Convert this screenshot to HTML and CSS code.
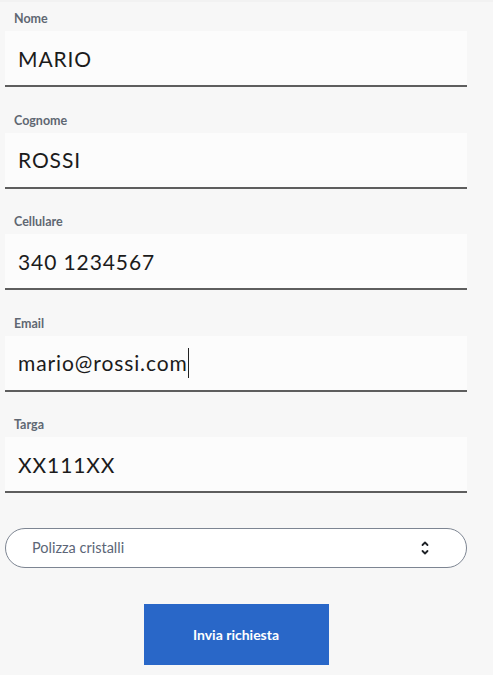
FILE: index.html
```html
<!DOCTYPE html>
<html lang="it">
<head>
<meta charset="utf-8">
<title>Richiesta</title>
<link rel="stylesheet" href="styles.css">
</head>
<body>
<div class="page">
  <form class="form">
    <div class="field">
      <label class="label">Nome</label>
      <div class="input">MARIO</div>
    </div>
    <div class="field">
      <label class="label">Cognome</label>
      <div class="input">ROSSI</div>
    </div>
    <div class="field">
      <label class="label">Cellulare</label>
      <div class="input">340 1234567</div>
    </div>
    <div class="field">
      <label class="label">Email</label>
      <div class="input">mario@rossi.com<span class="caret"></span></div>
    </div>
    <div class="field">
      <label class="label">Targa</label>
      <div class="input">XX111XX</div>
    </div>
    <div class="select">
      <span class="select-text">Polizza cristalli</span>
      <svg class="chev" width="10" height="16" viewBox="0 0 10 16" fill="none" stroke="#1f2328" stroke-width="1.8" stroke-linecap="round" stroke-linejoin="round">
        <path d="M2.5 5 L5 2.5 L7.5 5"/>
        <path d="M2.5 11 L5 13.5 L7.5 11"/>
      </svg>
    </div>
    <div class="actions">
      <button type="button" class="btn">Invia richiesta</button>
    </div>
  </form>
</div>
</body>
</html>
```
FILE: styles.css
```css
html, body {
  margin: 0;
  padding: 0;
  background: #ffffff;
}
.page {
  width: 493px;
  min-height: 675px;
  background: #f7f7f7;
  border-top: 2px solid #f2f2f2;
  box-sizing: border-box;
  font-family: Lato, "Noto Sans", sans-serif;
}
.form {
  display: flex;
  flex-direction: column;
  padding: 10px 0 0 5px;
  width: 462px;
}
.field {
  display: flex;
  flex-direction: column;
  margin-bottom: 26.5px;
}
.label {
  font-size: 12.5px;
  font-weight: 700;
  line-height: 14px;
  color: #5f6772;
  padding-left: 9px;
  margin-bottom: 5px;
}
.input {
  height: 54px;
  background: #fcfcfc;
  border-bottom: 2px solid #5e5e5e;
  display: flex;
  align-items: center;
  padding-left: 13px;
  box-sizing: content-box;
  font-size: 21px;
  color: #1b1b1b;
  letter-spacing: 0.9px;
}
.caret {
  display: inline-block;
  width: 1.5px;
  height: 30px;
  background: #222;
  margin-left: 0;
}
.select {
  margin-top: 8px;
  height: 38px;
  border: 1px solid #7d8592;
  border-radius: 20px;
  background: #ffffff;
  display: flex;
  align-items: center;
  justify-content: space-between;
  padding: 0 36px 0 26px;
}
.select-text {
  font-size: 14.5px;
  color: #5c6677;
}
.chev {
  display: block;
}
.actions {
  display: flex;
  justify-content: center;
  margin-top: 36px;
}
.btn {
  width: 185px;
  height: 61px;
  border: none;
  background: #2967c8;
  color: #ffffff;
  font-family: Lato, "Noto Sans", sans-serif;
  font-size: 14px;
  font-weight: 700;
  cursor: pointer;
}
```
